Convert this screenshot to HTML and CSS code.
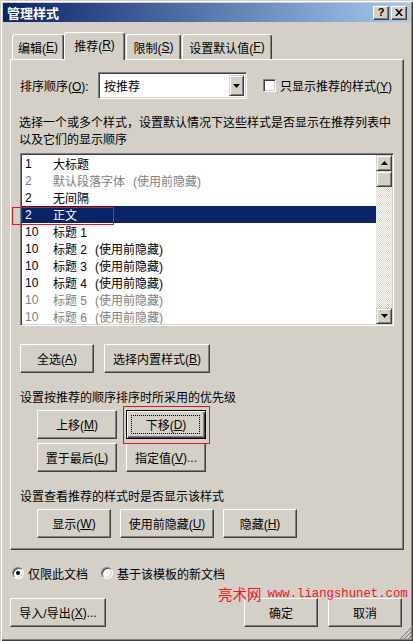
FILE: index.html
```html
<!DOCTYPE html>
<html lang="zh-CN">
<head>
<meta charset="utf-8">
<title>管理样式</title>
<link rel="stylesheet" href="styles.css">
</head>
<body>
<div class="window">
  <div class="titlebar">
    <span class="title">管理样式</span>
    <div class="tb-buttons">
      <span class="tb-btn help">?</span>
      <span class="tb-btn"><svg width="8" height="7" viewBox="0 0 8 7"><path d="M0 0h2l2 2.2L6 0h2L5 3.5 8 7H6L4 4.8 2 7H0l3-3.5z" fill="#000"/></svg></span>
    </div>
  </div>

  <div class="tabs">
    <div class="tab t1">编辑(<u>E</u>)</div>
    <div class="tab sel t2">推荐(<u>R</u>)</div>
    <div class="tab t3">限制(<u>S</u>)</div>
    <div class="tab t4">设置默认值(<u>F</u>)</div>
  </div>

  <div class="panel">
    <div class="sort-row">
      <span class="lbl">排序顺序(<u>O</u>):</span>
      <div class="combo">
        <span class="combo-text">按推荐</span>
        <span class="combo-btn"><svg width="7" height="4" viewBox="0 0 7 4"><path d="M0 0h7L3.5 4z" fill="#000"/></svg></span>
      </div>
      <span class="cb"></span>
      <span class="cb-lbl">只显示推荐的样式(<u>Y</u>)</span>
    </div>

    <p class="desc">选择一个或多个样式，设置默认情况下这些样式是否显示在推荐列表中<br>以及它们的显示顺序</p>

    <div class="list">
      <div class="rows">
        <div class="row"><span class="num">1</span><span>大标题</span></div>
        <div class="row dim"><span class="num">2</span><span>默认段落字体</span><span class="hid">(使用前隐藏)</span></div>
        <div class="row"><span class="num">2</span><span>无间隔</span></div>
        <div class="row selected"><span class="num">2</span><span>正文</span></div>
        <div class="row"><span class="num">10</span><span>标题 1</span></div>
        <div class="row"><span class="num">10</span><span>标题 2</span><span class="hid">(使用前隐藏)</span></div>
        <div class="row"><span class="num">10</span><span>标题 3</span><span class="hid">(使用前隐藏)</span></div>
        <div class="row"><span class="num">10</span><span>标题 4</span><span class="hid">(使用前隐藏)</span></div>
        <div class="row dim"><span class="num">10</span><span>标题 5</span><span class="hid">(使用前隐藏)</span></div>
        <div class="row dim"><span class="num">10</span><span>标题 6</span><span class="hid">(使用前隐藏)</span></div>
      </div>
      <div class="scrollbar">
        <span class="sb-btn"><svg width="7" height="4" viewBox="0 0 7 4"><path d="M3.5 0L7 4H0z" fill="#000"/></svg></span>
        <span class="sb-btn thumb"></span>
        <span class="sb-track"></span>
        <span class="sb-btn"><svg width="7" height="4" viewBox="0 0 7 4"><path d="M0 0h7L3.5 4z" fill="#000"/></svg></span>
      </div>
    </div>

    <div class="btn-row first">
      <span class="btn w74">全选(<u>A</u>)</span>
      <span class="btn w106">选择内置样式(<u>B</u>)</span>
    </div>

    <p class="section">设置按推荐的顺序排序时所采用的优先级</p>
    <div class="btn-row indent tight">
      <span class="btn w80">上移(<u>M</u>)</span>
      <span class="btn w80 default">下移(<u>D</u>)</span>
    </div>
    <div class="btn-row indent row2">
      <span class="btn w80">置于最后(<u>L</u>)</span>
      <span class="btn w80">指定值(<u>V</u>)...</span>
    </div>

    <p class="section">设置查看推荐的样式时是否显示该样式</p>
    <div class="btn-row indent tight">
      <span class="btn w74">显示(<u>W</u>)</span>
      <span class="btn w94">使用前隐藏(<u>U</u>)</span>
      <span class="btn w74">隐藏(<u>H</u>)</span>
    </div>
  </div>

  <div class="radio-row">
    <span class="radio checked"></span><span class="radio-lbl">仅限此文档</span>
    <span class="radio second"></span><span class="radio-lbl">基于该模板的新文档</span>
  </div>

  <div class="bottom-row">
    <span class="btn w96">导入/导出(<u>X</u>)...</span>
    <span class="spacer"></span>
    <span class="btn w74">确定</span>
    <span class="btn w74">取消</span>
  </div>

  <div class="watermark"><span class="wm-cn">亮术网</span><span class="wm-url">www.liangshunet.com</span></div>
  <div class="mark mark-row"></div>
  <div class="mark mark-btn"></div>
  <svg class="grip" width="12" height="12" viewBox="0 0 12 12">
    <path d="M11 1L1 11M11 5L5 11M11 9L9 11" stroke="#fff" stroke-width="1"/>
    <path d="M12 1L1 12M12 5L5 12M12 9L9 12" stroke="#808080" stroke-width="1.2"/>
  </svg>
</div>
</body>
</html>
```

FILE: styles.css
```css
* { box-sizing: border-box; }
html, body { margin: 0; padding: 0; }
body {
  width: 413px;
  height: 641px;
  overflow: hidden;
  background: #D4D0C8;
  font-family: "Liberation Sans", "Noto Sans CJK SC", sans-serif;
  font-size: 12px;
  color: #000;
}
u { text-decoration: underline; text-underline-offset: 1px; }
p { margin: 0; }

.window {
  position: relative;
  width: 413px;
  height: 641px;
  padding: 3px;
  background: #D4D0C8;
  box-shadow: inset 1px 1px #D4D0C8, inset 2px 2px #fff, inset -1px -1px #404040, inset -2px -2px #808080;
  display: flex;
  flex-direction: column;
}

.titlebar {
  height: 19px;
  flex: none;
  background: linear-gradient(to right, #0A246A, #A6CAF0);
  display: flex;
  align-items: center;
  justify-content: space-between;
  padding: 0 3px 0 4px;
}
.title {
  color: #fff;
  font-weight: bold;
  font-size: 13px;
  font-family: "Noto Sans CJK SC", sans-serif;
  line-height: 19px;
}
.tb-buttons { display: flex; gap: 2px; }
.tb-btn {
  width: 16px;
  height: 14px;
  background: #D4D0C8;
  border: 1px solid;
  border-color: #fff #404040 #404040 #fff;
  box-shadow: inset -1px -1px #808080;
  display: flex;
  align-items: center;
  justify-content: center;
  font-weight: bold;
  font-size: 11px;
  line-height: 1;
}

.tabs {
  flex: none;
  margin-top: 10px;
  height: 27px;
  padding-left: 9px;
  display: flex;
  align-items: flex-end;
  position: relative;
  z-index: 2;
}
.tab {
  height: 25px;
  border: 1px solid;
  border-color: #fff #404040 transparent #fff;
  border-bottom: none;
  border-radius: 3px 3px 0 0;
  box-shadow: inset -1px 0 #808080;
  display: flex;
  align-items: center;
  justify-content: center;
  background: #D4D0C8;
  white-space: nowrap;
}
.t1 { width: 52px; }
.t2 { width: 61px; }
.t3 { width: 55px; margin-left: 1px; }
.t4 { width: 90px; margin-left: 1px; }
.tab.sel {
  height: 28px;
  margin-bottom: -1px;
  padding-bottom: 3px;
}

.panel {
  flex: none;
  position: relative;
  z-index: 1;
  margin-left: 7px;
  width: 394px;
  height: 491px;
  border: 1px solid;
  border-color: #fff #404040 #404040 #fff;
  box-shadow: inset -1px -1px #808080;
  padding: 12px 0 0 9px;
}

.sort-row {
  height: 27px;
  display: flex;
  align-items: center;
}
.lbl { width: 78px; white-space: nowrap; }
.combo {
  width: 149px;
  height: 27px;
  background: #fff;
  border: 1px solid;
  border-color: #808080 #fff #fff #808080;
  box-shadow: inset 1px 1px #404040, inset -1px -1px #D4D0C8;
  padding: 2px;
  display: flex;
  align-items: stretch;
}
.combo-text { flex: 1; display: flex; align-items: center; padding-left: 3px; }
.combo-btn {
  width: 15px;
  background: #D4D0C8;
  border: 1px solid;
  border-color: #D4D0C8 #404040 #404040 #D4D0C8;
  box-shadow: inset 1px 1px #fff, inset -1px -1px #808080;
  display: flex;
  align-items: center;
  justify-content: center;
}
.cb {
  width: 13px;
  height: 13px;
  margin-left: 16px;
  background: #fff;
  border: 1px solid;
  border-color: #808080 #fff #fff #808080;
  box-shadow: inset 1px 1px #404040, inset -1px -1px #D4D0C8;
}
.cb-lbl { margin-left: 4px; white-space: nowrap; }

.desc {
  margin-top: 16px;
  line-height: 17px;
  margin-left: -1px;
}

.list {
  margin-top: 4px;
  width: 374px;
  height: 173px;
  background: #fff;
  border: 1px solid;
  border-color: #808080 #fff #fff #808080;
  box-shadow: inset 1px 1px #404040, inset -1px -1px #D4D0C8;
  padding: 1px;
  display: flex;
}
.rows { flex: 1; overflow: hidden; }
.row {
  height: 17px;
  display: flex;
  align-items: center;
  padding-left: 3px;
  white-space: nowrap;
}
.row .num { width: 28px; }
.row .hid { margin-left: 8px; }
.row.dim { color: #808080; }
.row.selected { background: #0A246A; color: #fff; }

.scrollbar {
  width: 16px;
  display: flex;
  flex-direction: column;
}
.sb-btn {
  flex: none;
  height: 16px;
  background: #D4D0C8;
  border: 1px solid;
  border-color: #D4D0C8 #404040 #404040 #D4D0C8;
  box-shadow: inset 1px 1px #fff, inset -1px -1px #808080;
  display: flex;
  align-items: center;
  justify-content: center;
}
.sb-track {
  flex: 1;
  background: repeating-conic-gradient(#fff 0 25%, #D4D0C8 0 50%) 0 0 / 2px 2px;
}

.btn-row { display: flex; gap: 10px; }
.btn-row.first { margin-top: 18px; }
.btn-row.indent { padding-left: 17px; gap: 9px; }
.btn-row.tight { margin-top: 3px; }
.btn-row.row2 { margin-top: 4px; }
.section { margin-top: 17px; line-height: 17px; }

.btn {
  position: relative;
  flex: none;
  height: 29px;
  background: #D4D0C8;
  border: 1px solid;
  border-color: #fff #404040 #404040 #fff;
  box-shadow: inset -1px -1px #808080;
  display: flex;
  align-items: center;
  justify-content: center;
  white-space: nowrap;
}
.btn.default {
  border-color: #000;
  box-shadow: inset 1px 1px #fff, inset -1px -1px #404040, inset -2px -2px #808080;
}
.btn.default::after {
  content: "";
  position: absolute;
  inset: 4px 5px 4px 4px;
  border: 1px dotted #000;
}
.w74 { width: 74px; }
.w80 { width: 80px; }
.w94 { width: 94px; }
.w96 { width: 96px; }
.w106 { width: 106px; }

.radio-row {
  flex: none;
  margin-top: 15px;
  height: 16px;
  display: flex;
  align-items: center;
  padding-left: 9px;
}
.radio {
  position: relative;
  width: 12px;
  height: 12px;
  border-radius: 50%;
  background: #fff;
  border: 1px solid;
  border-color: #808080 #fff #fff #808080;
  box-shadow: inset 1px 1px #404040, inset -1px -1px #D4D0C8;
}
.radio.checked::after {
  content: "";
  position: absolute;
  left: 3px;
  top: 3px;
  width: 4px;
  height: 4px;
  border-radius: 50%;
  background: #000;
}
.radio.second { margin-left: 13px; }
.radio-lbl { margin-left: 4px; white-space: nowrap; }

.bottom-row {
  flex: none;
  margin-top: 17px;
  display: flex;
  gap: 10px;
  padding-left: 7px;
  padding-right: 8px;
}
.spacer { flex: 1; }

.watermark {
  position: absolute;
  left: 218px;
  top: 584px;
  color: #F5141E;
  display: flex;
  align-items: center;
  white-space: nowrap;
  z-index: 5;
}
.wm-cn {
  font-family: "Noto Sans CJK SC", sans-serif;
  font-size: 14.5px;
  line-height: 20px;
  letter-spacing: 0;
}
.wm-url {
  font-family: "Liberation Mono", monospace;
  font-size: 12.3px;
  margin-left: 6px;
}

.mark {
  position: absolute;
  border: 1px solid #E8141C;
  z-index: 6;
}
.mark-row { left: 12px; top: 207px; width: 102px; height: 18px; }
.mark-btn { left: 123px; top: 406px; width: 87px; height: 38px; }

.grip {
  position: absolute;
  right: 2px;
  bottom: 2px;
}
```
